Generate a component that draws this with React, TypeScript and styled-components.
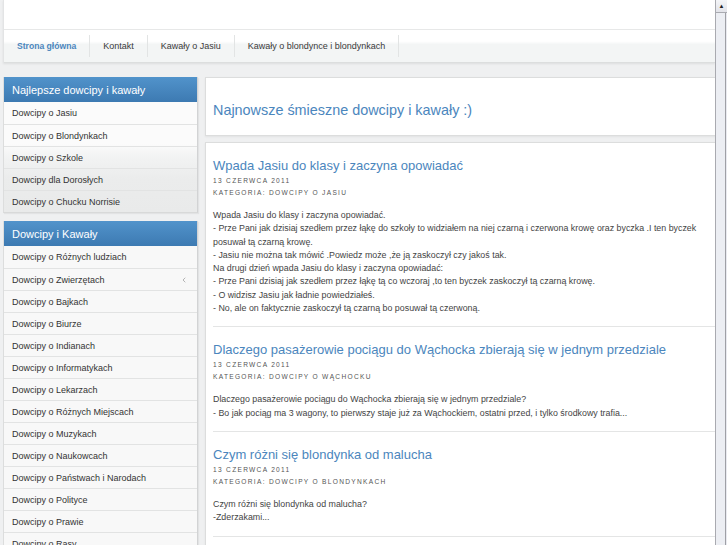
import React from "react";
import styled, { createGlobalStyle } from "styled-components";
import { ChevronLeft } from "lucide-react";

const GlobalStyle = createGlobalStyle`
  html, body { margin: 0; padding: 0; }
  body {
    background: #eff0f1;
    font-family: "Liberation Sans", Arial, Helvetica, sans-serif;
    overflow: hidden;
  }
`;

const Page = styled.div`
  display: flex;
  width: 727px;
  height: 545px;
  overflow: hidden;
`;

const Viewport = styled.div`
  flex: 1;
  min-width: 0;
  display: flex;
  flex-direction: column;
  overflow: hidden;
`;

const Header = styled.header`
  margin-left: 3px;
  background: #fff;
  border-left: 1px solid #e3e4e5;
  box-shadow: 0 1px 2px rgba(0, 0, 0, 0.08);
`;

const TopStrip = styled.div`
  height: 29px;
  border-bottom: 1px solid #e7e8e8;
`;

const Nav = styled.nav`
  height: 32px;
  display: flex;
  align-items: center;
  background: linear-gradient(#ffffff 0%, #ffffff 35%, #f3f5f5 45%, #f3f5f5 100%);
  border-bottom: 1px solid #dcdede;
`;

const NavItem = styled.a<{ $active?: boolean }>`
  display: flex;
  align-items: center;
  height: 22px;
  padding: 0 13px;
  border-right: 1px solid #e2e4e4;
  font-size: ${(p) => (p.$active ? "8.6px" : "9px")};
  font-weight: ${(p) => (p.$active ? 700 : 400)};
  color: ${(p) => (p.$active ? "#4b86bd" : "#3a3a3a")};
  text-decoration: none;
  white-space: nowrap;
`;

const Body = styled.div`
  display: grid;
  grid-template-columns: 195px 520px;
  column-gap: 7px;
  padding: 14px 0 0 3px;
`;

const Sidebar = styled.aside`
  display: flex;
  flex-direction: column;
  gap: 8px;
`;

const Block = styled.section`
  border-left: 1px solid #dcdddd;
  border-right: 1px solid #d2d3d4;
  border-bottom: 1px solid #d8d9d9;
  box-shadow: 1px 1px 1px rgba(0, 0, 0, 0.05);
`;

const BlockTitle = styled.h3`
  margin: 0;
  height: 25px;
  display: flex;
  align-items: center;
  padding-left: 8px;
  font-size: 11px;
  font-weight: 400;
  color: #fff;
  background: linear-gradient(#5193cb, #3d7ab2);
`;

const List = styled.ul<{ $fade?: boolean }>`
  margin: 0;
  padding: 0;
  list-style: none;
  background: ${(p) =>
    p.$fade
      ? "linear-gradient(#fbfbfb 0%, #fbfbfb 38%, #f2f3f3 50%, #ebecec 70%, #e9eaea 100%)"
      : "#f8f8f8"};
`;

const Row = styled.li`
  height: 22px;
  display: flex;
  align-items: center;
  justify-content: space-between;
  padding: 0 9px 0 8px;
  font-size: 9px;
  color: #333;
  border-top: 1px solid #e2e3e3;
  box-sizing: border-box;
  &:first-child { border-top: none; }
`;

const Content = styled.main`
  display: flex;
  flex-direction: column;
  gap: 6px;
`;

const Panel = styled.section`
  background: #fff;
  border: 1px solid #dcdddd;
  box-shadow: 0 1px 2px rgba(0, 0, 0, 0.06);
`;

const PageTitle = styled.h1`
  margin: 0;
  padding: 23px 7px 16px;
  font-size: 14.4px;
  font-weight: 400;
  line-height: 18px;
  color: #4b86bd;
`;

const Post = styled.article`
  margin-left: 7px;
  padding: 14px 16px 11px 0;
  border-bottom: 1px solid #e4e5e5;
`;

const PostTitle = styled.h2`
  margin: 0;
  font-size: 13px;
  font-weight: 400;
  line-height: 18px;
  color: #4b86bd;
  white-space: nowrap;
`;

const Meta = styled.div`
  font-size: 6.6px;
  line-height: 12px;
  letter-spacing: 1.3px;
  text-transform: uppercase;
  color: #555;
`;

const Text = styled.div`
  margin-top: 10px;
  font-size: 8.85px;
  line-height: 13.3px;
  color: #444;
`;

const Scrollbar = styled.div`
  width: 12px;
  flex: none;
  display: flex;
  flex-direction: column;
  background: #e9eaf0;
  border-left: 1px solid #a9aab0;
  box-sizing: border-box;
`;

const ScrollButton = styled.div`
  height: 12px;
  display: flex;
  align-items: center;
  justify-content: center;
  background: linear-gradient(#f4f5f8, #e2e3e9);
  border-bottom: 1px solid #a9aab0;
  font-size: 6px;
  color: #222;
`;

const Thumb = styled.div`
  flex: 1;
  margin: 0 1px 0 0;
  background: #eceef3;
  border-right: 1px solid #9fa0a6;
`;

const block1 = [
  "Dowcipy o Jasiu",
  "Dowcipy o Blondynkach",
  "Dowcipy o Szkole",
  "Dowcipy dla Dorosłych",
  "Dowcipy o Chucku Norrisie",
];

const block2 = [
  "Dowcipy o Różnych ludziach",
  "Dowcipy o Zwierzętach",
  "Dowcipy o Bajkach",
  "Dowcipy o Biurze",
  "Dowcipy o Indianach",
  "Dowcipy o Informatykach",
  "Dowcipy o Lekarzach",
  "Dowcipy o Różnych Miejscach",
  "Dowcipy o Muzykach",
  "Dowcipy o Naukowcach",
  "Dowcipy o Państwach i Narodach",
  "Dowcipy o Polityce",
  "Dowcipy o Prawie",
  "Dowcipy o Rasy",
];

const posts = [
  {
    title: "Wpada Jasiu do klasy i zaczyna opowiadać",
    date: "13 czerwca 2011",
    cat: "Kategoria: Dowcipy o Jasiu",
    lines: [
      "Wpada Jasiu do klasy i zaczyna opowiadać.",
      "- Prze Pani jak dzisiaj szedłem przez łąkę do szkoły to widziałem na niej czarną i czerwona krowę oraz byczka .I ten byczek posuwał tą czarną krowę.",
      "- Jasiu nie można tak mówić .Powiedz może ,że ją zaskoczył czy jakoś tak.",
      "Na drugi dzień wpada Jasiu do klasy i zaczyna opowiadać:",
      "- Prze Pani dzisiaj jak szedłem przez łąkę tą co wczoraj ,to ten byczek zaskoczył tą czarną krowę.",
      "- O widzisz Jasiu jak ładnie powiedziałeś.",
      "- No, ale on faktycznie zaskoczył tą czarną bo posuwał tą czerwoną.",
    ],
  },
  {
    title: "Dlaczego pasażerowie pociągu do Wąchocka zbierają się w jednym przedziale",
    date: "13 czerwca 2011",
    cat: "Kategoria: Dowcipy o Wąchocku",
    lines: [
      "Dlaczego pasażerowie pociągu do Wąchocka zbierają się w jednym przedziale?",
      "- Bo jak pociąg ma 3 wagony, to pierwszy staje już za Wąchockiem, ostatni przed, i tylko środkowy trafia...",
    ],
  },
  {
    title: "Czym różni się blondynka od malucha",
    date: "13 czerwca 2011",
    cat: "Kategoria: Dowcipy o Blondynkach",
    lines: ["Czym różni się blondynka od malucha?", "-Zderzakami..."],
  },
  {
    title: "Jasiu i pani od matematyki",
    date: "13 czerwca 2011",
    cat: "Kategoria: Dowcipy o Jasiu",
    lines: ["..."],
  },
];

export default function App() {
  return (
    <>
      <GlobalStyle />
      <Page>
        <Viewport>
          <Header>
            <TopStrip />
            <Nav>
              <NavItem $active>Strona główna</NavItem>
              <NavItem>Kontakt</NavItem>
              <NavItem>Kawały o Jasiu</NavItem>
              <NavItem>Kawały o blondynce i blondynkach</NavItem>
            </Nav>
          </Header>
          <Body>
            <Sidebar>
              <Block>
                <BlockTitle>Najlepsze dowcipy i kawały</BlockTitle>
                <List $fade>
                  {block1.map((t) => (
                    <Row key={t}>{t}</Row>
                  ))}
                </List>
              </Block>
              <Block>
                <BlockTitle>Dowcipy i Kawały</BlockTitle>
                <List>
                  {block2.map((t, i) => (
                    <Row key={t}>
                      {t}
                      {i === 1 && <ChevronLeft size={8} strokeWidth={1.6} color="#777" />}
                    </Row>
                  ))}
                </List>
              </Block>
            </Sidebar>
            <Content>
              <Panel>
                <PageTitle>Najnowsze śmieszne dowcipy i kawały :)</PageTitle>
              </Panel>
              <Panel>
                {posts.map((p) => (
                  <Post key={p.title}>
                    <PostTitle>{p.title}</PostTitle>
                    <Meta>{p.date}</Meta>
                    <Meta>{p.cat}</Meta>
                    <Text>
                      {p.lines.map((l, i) => (
                        <div key={i}>{l}</div>
                      ))}
                    </Text>
                  </Post>
                ))}
              </Panel>
            </Content>
          </Body>
        </Viewport>
        <Scrollbar>
          <ScrollButton>▲</ScrollButton>
          <Thumb />
        </Scrollbar>
      </Page>
    </>
  );
}
